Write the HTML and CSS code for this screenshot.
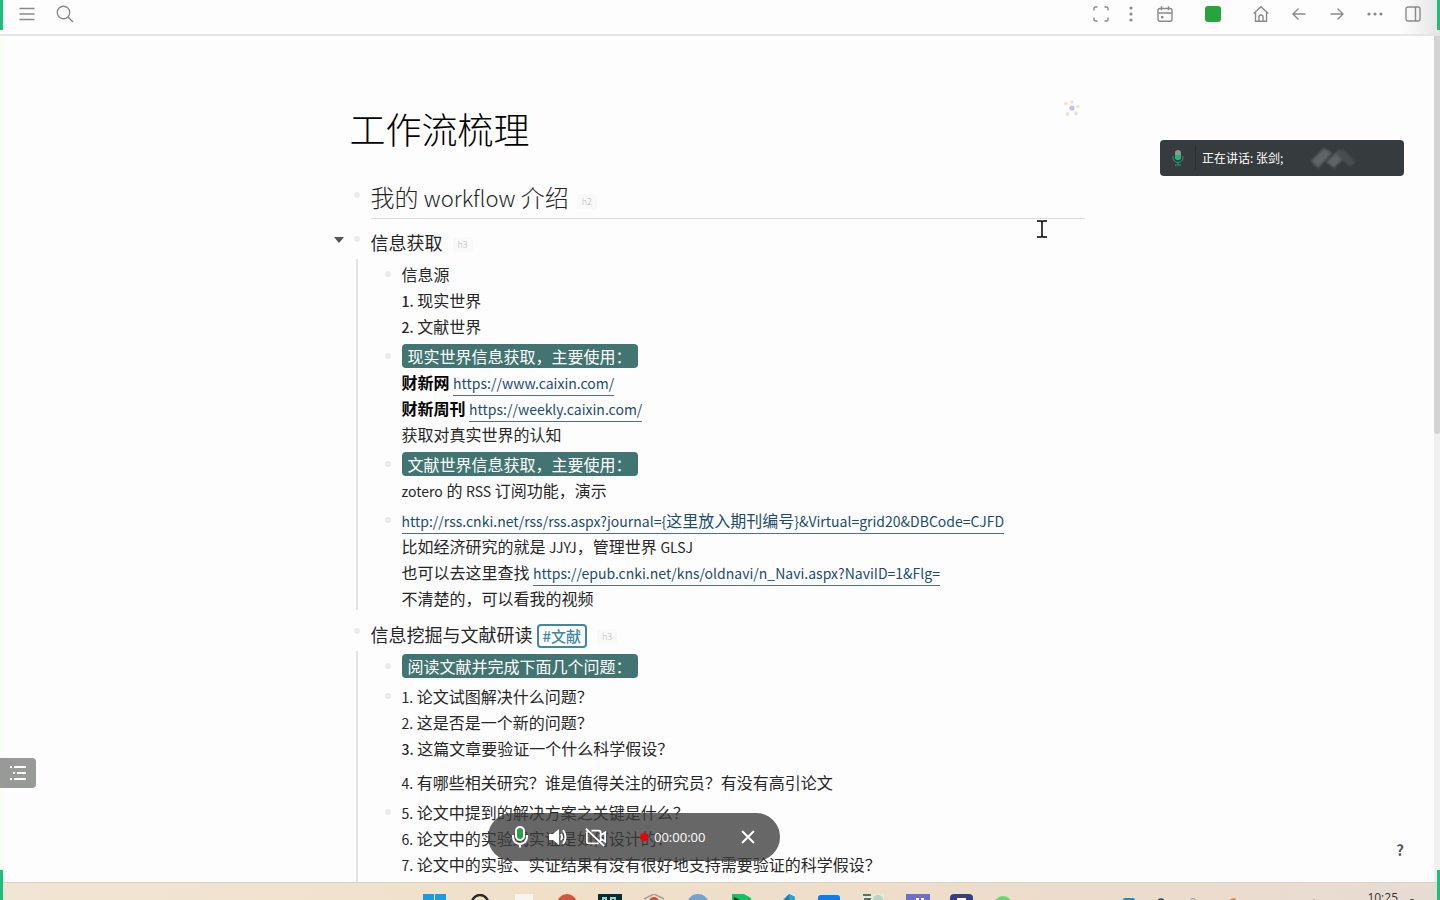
FILE: index.html
```
<!DOCTYPE html>
<html lang="zh-CN">
<head>
<meta charset="utf-8">
<title>工作流梳理</title>
<link rel="stylesheet" href="styles.css">
</head>
<body>
<div class="app">
  <header class="topbar">
    <div class="tools tools-left">
      <button class="tool" aria-label="菜单"><svg viewBox="0 0 16 16"><path d="M.5 2.500h15M.5 8h15M.5 13.500h15"/></svg></button>
      <button class="tool tool-search" aria-label="搜索"><svg viewBox="0 0 18 18"><circle cx="7.500" cy="7.500" r="6.200"/><path d="M12 12l5 5"/></svg></button>
    </div>
    <div class="tools tools-right">
      <button class="tool" aria-label="全屏"><svg viewBox="0 0 16 16"><path d="M1 4.500V2.500Q1 1 2.500 1H4.500M11.500 1h2Q15 1 15 2.500v2M15 11.500v2Q15 15 13.500 15h-2M4.500 15h-2Q1 15 1 13.500v-2"/></svg></button>
      <button class="tool tool-close" aria-label="更多"><svg viewBox="0 0 16 16" class="dots"><circle cx="8" cy="2" r="1.600"/><circle cx="8" cy="8" r="1.600"/><circle cx="8" cy="14" r="1.600"/></svg></button>
      <button class="tool" aria-label="日历"><svg viewBox="0 0 16 16"><rect x="1" y="2.500" width="14" height="12.800" rx="2"/><path d="M1 7h14M4.500.3v4M11.500.3v4"/><rect x="4" y="10" width="2.400" height="2.400" fill="currentColor" stroke="none"/></svg></button>
      <button class="tool tool-wide" aria-label="状态"><span class="swatch"></span></button>
      <button class="tool" aria-label="主页"><svg viewBox="0 0 16 16"><path d="M.7 7.500L8 .8l7.300 6.700M2.500 6.500v8.700h11V6.500M6 15v-4q0-2 2-2t2 2v4"/></svg></button>
      <button class="tool" aria-label="后退"><svg viewBox="0 0 16 16"><path d="M14.500 8H2M7.500 2.500L2 8l5.500 5.500"/></svg></button>
      <button class="tool" aria-label="前进"><svg viewBox="0 0 16 16"><path d="M1.500 8H14M8.500 2.500L14 8l-5.500 5.500"/></svg></button>
      <button class="tool" aria-label="选项"><svg viewBox="0 0 16 16" class="dots"><circle cx="2" cy="8" r="1.600"/><circle cx="8" cy="8" r="1.600"/><circle cx="14" cy="8" r="1.600"/></svg></button>
      <button class="tool" aria-label="侧栏"><svg viewBox="0 0 16 16"><rect x="1" y="1" width="14" height="14" rx="2"/><path d="M10.500 1v14"/></svg></button>
    </div>
  </header>

  <div class="workspace">
    <main class="page">
      <div class="title-row">
        <h1>工作流梳理</h1>
        <svg class="flower" viewBox="0 0 18 18"><circle cx="9" cy="8" r="2.600" fill="#c9bbea"/><g fill="#f0e3c6"><circle cx="3" cy="3.500" r="1.700"/><circle cx="9" cy="2" r="1.700"/><circle cx="15" cy="6.500" r="1.700"/><circle cx="4.500" cy="14" r="1.900"/><circle cx="13" cy="13.500" r="1.900"/></g></svg>
      </div>

      <section class="node">
        <h2>我的 <span class="latin">workflow</span> 介绍<span class="level">h2</span></h2>
      </section>

      <section class="node first">
        <h3><button class="fold" aria-label="折叠"></button>信息获取<span class="level">h3</span></h3>
        <ul class="children">
          <li><p>信息源</p><p><b>1.</b> 现实世界</p><p><b>2.</b> 文献世界</p></li>
          <li><p><mark>现实世界信息获取，主要使用：</mark></p><p><strong>财新网</strong> <a href="#"><span class="latin">https://www.caixin.com/</span></a></p><p><strong>财新周刊</strong> <a href="#"><span class="latin">https://weekly.caixin.com/</span></a></p><p>获取对真实世界的认知</p></li>
          <li><p><mark>文献世界信息获取，主要使用：</mark></p><p><span class="latin">zotero</span> 的 <span class="latin">RSS</span> 订阅功能，演示</p></li>
          <li><p><a href="#"><span class="latin">http://rss.cnki.net/rss/rss.aspx?journal={</span>这里放入期刊编号<span class="latin">}&amp;Virtual=grid20&amp;DBCode=CJFD</span></a></p><p>比如经济研究的就是 <span class="latin">JJYJ</span>，管理世界 <span class="latin">GLSJ</span></p><p>也可以去这里查找 <a href="#"><span class="latin">https://epub.cnki.net/kns/oldnavi/n_Navi.aspx?NaviID=1&amp;Flg=</span></a></p><p>不清楚的，可以看我的视频</p></li>
        </ul>
      </section>

      <section class="node second">
        <h3>信息挖掘与文献研读<a href="#" class="tag">#文献</a><span class="level">h3</span></h3>
        <ul class="children">
          <li><p><mark>阅读文献并完成下面几个问题：</mark></p></li>
          <li><p><span class="latin">1.</span> 论文试图解决什么问题？</p><p><span class="latin">2.</span> 这是否是一个新的问题？</p><p><b>3.</b> 这篇文章要验证一个什么科学假设？</p><p class="spaced"><span class="latin">4.</span> 有哪些相关研究？谁是值得关注的研究员？有没有高引论文</p></li>
          <li><p><span class="latin">5.</span> 论文中提到的解决方案之关键是什么？</p><p><span class="latin">6.</span> 论文中的实验或实证是如何设计的？</p><p><span class="latin">7.</span> 论文中的实验、实证结果有没有很好地支持需要验证的科学假设？</p><p><span class="latin">8.</span> 这篇论文到底有什么贡献？</p></li>
        </ul>
      </section>
    </main>
    <div class="scrollbar"><div class="thumb"></div></div>

    <button class="outline" aria-label="大纲"><svg viewBox="0 0 18 16"><path d="M1 2h2M5 2h12M4 8h2M8 8h9M1 14h2M5 14h12"/></svg></button>
    <button class="help">?</button>
    <svg class="cursor" viewBox="0 0 10 18"><path d="M0 1h4l1 1 1-1h4M0 17h4l1-1 1 1h4M5 2v14"/></svg>

    <div class="speaker">
      <svg class="speaker-mic" viewBox="0 0 12 16"><rect x="3" y="0" width="6" height="10" rx="3" fill="#8b9692"/><path d="M3 5h6v2a3 3 0 0 1-6 0z" fill="#1fb573"/><path d="M1 6v1.500a5 5 0 0 0 10 0V6M6 12.500V15M3 15h6" fill="none" stroke="#2b9c70"/></svg>
      <span class="speaker-name">正在讲话: 张剑;</span>
      <svg class="speaker-mark" viewBox="0 0 48 24"><path d="M1 15L14 2l8 5-14 15z" fill="#5f6465"/><path d="M16 16L29 4l7 6-12 12z" fill="#5f6465"/><path d="M26 8l7-5 13 13-6 5z" fill="#484d4f"/></svg>
    </div>

    <div class="recorder">
      <button class="rec rec-mic" aria-label="麦克风"><svg viewBox="0 0 20 22"><rect x="6" y="1" width="8" height="13" rx="4" fill="#25a244"/><path d="M3 9v2a7 7 0 0 0 14 0V9M10 18v3.500"/></svg></button>
      <button class="rec" aria-label="音量"><svg viewBox="0 0 20 22"><path d="M1 8h4l6-5v16l-6-5H1z" fill="#fff" stroke="none"/><path d="M13 8q2 3 0 6M15 4q5 7 0 14"/></svg></button>
      <button class="rec" aria-label="摄像头"><svg viewBox="0 0 24 22"><path d="M7 4h8q2 0 2 2v10M17 9l5-3v10l-5-3M15 18H4q-2 0-2-2V5M1 2l20 19"/></svg></button>
      <span class="rec-dot"></span><time>00:00:00</time>
      <button class="rec rec-close" aria-label="关闭"><svg viewBox="0 0 16 16"><path d="M2 2l12 12M14 2L2 14"/></svg></button>
    </div>
  </div>

  <footer class="taskbar">
    <div class="apps">
      <svg viewBox="0 0 24 12"><path d="M1 0h11v12H1zM13 0h11v12H13z" fill="#1b9ce0"/></svg>
      <svg viewBox="0 0 24 12"><circle cx="14" cy="9" r="8" fill="none" stroke="#292929" stroke-width="2.500"/></svg>
      <svg viewBox="0 0 24 12"><rect x="5" y="0" width="18" height="12" fill="#f8f5f1"/></svg>
      <svg viewBox="0 0 24 12"><circle cx="13" cy="10" r="10" fill="#d2553f"/></svg>
      <svg viewBox="0 0 24 12"><path d="M0 0h24v12H0z" fill="#062d32"/><path d="M5 8V4h3v4M13 8V4h4v4" stroke="#9bd0cd" fill="none" stroke-width="2"/></svg>
      <svg viewBox="0 0 24 12"><path d="M2 5L12 0l10 5" fill="none" stroke="#a99f99" stroke-width="1.500"/><circle cx="12" cy="8" r="5" fill="#d94848"/></svg>
      <svg viewBox="0 0 24 12"><circle cx="12" cy="11" r="11" fill="#75a2d0"/></svg>
      <svg viewBox="0 0 24 12"><path d="M2 0h12l7 4 1 8H2z" fill="#17c067"/><path d="M4 3l6 3h9v6H4z" fill="#102b21"/></svg>
      <svg viewBox="0 0 24 12"><path d="M3 12L15 0l6 3v9z" fill="#1684c2"/><path d="M15 0l6 3v9h-5z" fill="#29a8cf"/></svg>
      <svg viewBox="0 0 24 12"><rect x="0" y="1" width="22" height="15" rx="3" fill="#0c7cf5"/></svg>
      <svg viewBox="0 0 24 12"><path d="M0 0h22v12H0z" fill="#e6e9da"/><path d="M1 1h8M2 5h7" stroke="#4f7566" stroke-width="2"/><circle cx="16" cy="6" r="5" fill="#b5d5c1"/></svg>
      <svg viewBox="0 0 24 12"><path d="M0 0h24v12H0z" fill="#6f6fca"/><path d="M10 4h3v6h-3zM15 4h3v6h-3z" fill="#fff"/></svg>
      <svg viewBox="0 0 24 12"><rect width="23" height="18" rx="4" fill="#393d88"/><path d="M7 4h9v5H7z" fill="#fff"/></svg>
      <svg viewBox="0 0 24 12"><circle cx="9" cy="11" r="9" fill="#5ddb70"/></svg>
    </div>
    <div class="tray">
      <svg viewBox="0 0 200 8"><rect x="0" y="2" width="12" height="8" rx="2" fill="#168fd6"/><circle cx="38" cy="6" r="3" fill="none" stroke="#33405f" stroke-width="1.500"/><circle cx="70" cy="5" r="2.500" fill="none" stroke="#9a9288"/><path d="M104 8q2-6 9-6l-3 6z" fill="#dc7650"/><path d="M129 7h20M174 4l3 3M188 4v2M191 3v3" stroke="#8a7d71" fill="none"/></svg>
      <time class="clock">10:25</time>
      <span class="bell"></span>
    </div>
  </footer>

  <i class="edge edge-tl"></i><i class="edge edge-tr"></i><i class="edge edge-bl"></i><i class="edge edge-br"></i>
</div>
</body>
</html>
```
FILE: styles.css
```
* { box-sizing: border-box; }
body { margin: 0; font-family: "Noto Sans CJK SC", sans-serif; font-size: 16px; color: #262626; background: #fdfdfe; }
button { border: 0; padding: 0; background: none; font: inherit; color: inherit; }
svg { display: block; fill: none; }
h1, h2, h3, p, ul { margin: 0; padding: 0; }

.app { position: relative; height: 100vh; display: flex; flex-direction: column; overflow: hidden; }

/* Top toolbar */
.topbar { flex: none; height: 36px; padding: 0 15px 6px; display: flex; justify-content: space-between; align-items: center; border-bottom: 2px solid #e6e6e8; background: linear-gradient(to left, #e4e4e4, #fdfdfe 40px); }
.tools { display: flex; align-items: center; gap: 14px; color: #8a8a8a; }
.tool { width: 24px; height: 24px; display: grid; place-items: center; }
.tool svg { width: 16px; height: 16px; stroke: currentColor; stroke-width: 1.4; overflow: visible; }
.tool-search svg { width: 18px; height: 18px; }
.tool .dots { fill: currentColor; stroke: none; }
.tool-close { margin: 0 -4px 0 -8px; }
.tool-wide { margin: 0 10px; }
.swatch { width: 16px; height: 16px; border-radius: 3px; background: #27a43c; }

/* Document */
.workspace { position: relative; flex: 1; min-height: 0; display: flex; overflow: hidden; background: linear-gradient(90deg, #f7fff4, #fdfdfe 6px); }
.page { width: 100%; max-width: 735px; margin: 0 auto; padding-top: 64px; }
.scrollbar { flex: none; width: 6px; background: #f0f0f0; }
.thumb { height: 47%; background: #d4d4d4; border-radius: 0 0 3px 3px; }

.title-row { display: flex; justify-content: space-between; align-items: flex-start; }
h1 { font-size: 36px; line-height: 56px; font-weight: 200; color: #000; }
.flower { width: 18px; height: 18px; margin-right: 4px; }

.node { position: relative; padding-left: 21px; }
.node::before, li::before { content: ""; position: absolute; width: 6px; height: 6px; border-radius: 50%; background: #ebebed; }
.node::before { left: 4px; top: 10px; }
h2 { margin-top: 22px; padding-bottom: 2px; border-bottom: 1px solid #dcdcde; font-size: 24px; line-height: 38px; font-weight: 200; }
.node:has(h2)::before { top: 14px; }
h3 { position: relative; font-size: 18px; line-height: 32px; font-weight: 400; }
.first, .second { margin-top: 7px; }
.level { margin-left: 8px; padding: 1px 5px; border-radius: 3px; background: #f9f9fa; font-size: 9px; line-height: 1; font-weight: 300; color: #bbb; vertical-align: 2px; }
h3 .level { margin-left: 10px; }
.fold { position: absolute; left: -37px; top: 11px; border: 5px solid transparent; border-top: 6px solid #555; border-bottom: 0; }

.children { position: relative; list-style: none; padding: 3px 0 0 31px; display: flex; flex-direction: column; gap: 4px; }
.children::before { content: ""; position: absolute; left: -15px; top: 1px; bottom: 1px; width: 2px; background: #e4e4e6; }
li { position: relative; line-height: 26px; }
li::before { left: -17px; top: 10px; }
li p { white-space: nowrap; }
.spaced { margin-top: 8px; }
.latin, b { font-size: 14px; line-height: 1; }
h2 .latin { font-size: 22px; }
b { font-weight: 500; }
strong { font-weight: 700; color: #000; }
li a { padding-bottom: 1px; color: #1b4d6b; text-decoration: none; border-bottom: 1px solid #4e7182; }
mark { padding: 0 6px; border-radius: 4px; background: #427571; color: #fff; }
.tag { display: inline-block; margin-left: 4px; padding: 0 4px; border: 2px solid #4088a4; border-radius: 4px; font-size: 15px; line-height: 20px; font-weight: 500; color: #4088a4; text-decoration: none; }

/* Floating controls */
.outline { position: absolute; left: 0; top: 722px; width: 36px; height: 30px; display: grid; place-items: center; border-radius: 0 4px 4px 0; background: #989a98; }
.outline svg { width: 18px; height: 16px; stroke: #fff; stroke-width: 2; }
.help { position: absolute; right: 30px; bottom: 20px; width: 20px; height: 24px; font-size: 15px; line-height: 24px; font-weight: 700; color: #555; }
.cursor { position: absolute; left: 1037px; top: 184px; width: 10px; height: 18px; stroke: #000; stroke-width: 1.5; }

.speaker { position: absolute; right: 36px; top: 104px; width: 244px; height: 36px; display: flex; align-items: center; border-radius: 4px; background: #363b3e; color: #fff; }
.speaker-mic { width: 12px; height: 16px; margin: 0 11px 0 12px; }
.speaker-name { padding-left: 6px; border-left: 1px solid #2b2f31; font-size: 12px; line-height: 24px; }
.speaker-mark { width: 48px; height: 24px; margin-left: 27px; filter: blur(1px); }

.recorder { position: absolute; left: 488px; bottom: 21px; height: 48px; width: 292px; padding: 0 20px; display: flex; align-items: center; gap: 14px; border-radius: 24px; background: rgba(60, 60, 60, .78); color: #fff; }
.rec { width: 24px; height: 24px; display: grid; place-items: center; }
.rec svg { width: 22px; height: 22px; stroke: #fff; stroke-width: 2; }
.rec-dot { width: 8px; height: 8px; margin-left: 18px; border-radius: 50%; background: #f00000; }
.recorder time { margin-left: -8px; font: 13px/24px "Open Sans", sans-serif; }
.rec-close { margin-left: auto; }
.rec-close svg { width: 16px; height: 16px; }

/* Desktop taskbar */
.taskbar { position: relative; flex: none; height: 18px; padding-top: 11px; display: flex; justify-content: center; align-items: flex-start; overflow: hidden; border-top: 1px solid #d8d1c8; background: linear-gradient(90deg, #f1e5d3, #f0e0c8 40%, #eddccb 75%, #e7dcd3); }
.apps { display: flex; gap: 20px; }
.apps svg { width: 24px; height: 12px; }
.tray { position: absolute; right: 25px; top: 7px; display: flex; align-items: flex-start; }
.tray svg { width: 200px; height: 8px; margin-top: 6px; margin-right: 44px; }
.clock { font: 12px/16px "Open Sans", sans-serif; color: #333; }
.bell { width: 6px; height: 6px; margin: 9px 0 0 11px; border-radius: 3px 3px 0 0; background: #444; }

/* Screen share frame corners */
.edge { position: absolute; width: 3px; height: 30px; background: #1cc07c; }
.edge-tl { left: 0; top: 0; }
.edge-tr { right: 0; top: 0; }
.edge-bl { left: 0; bottom: 0; }
.edge-br { right: 0; bottom: 0; }
```
